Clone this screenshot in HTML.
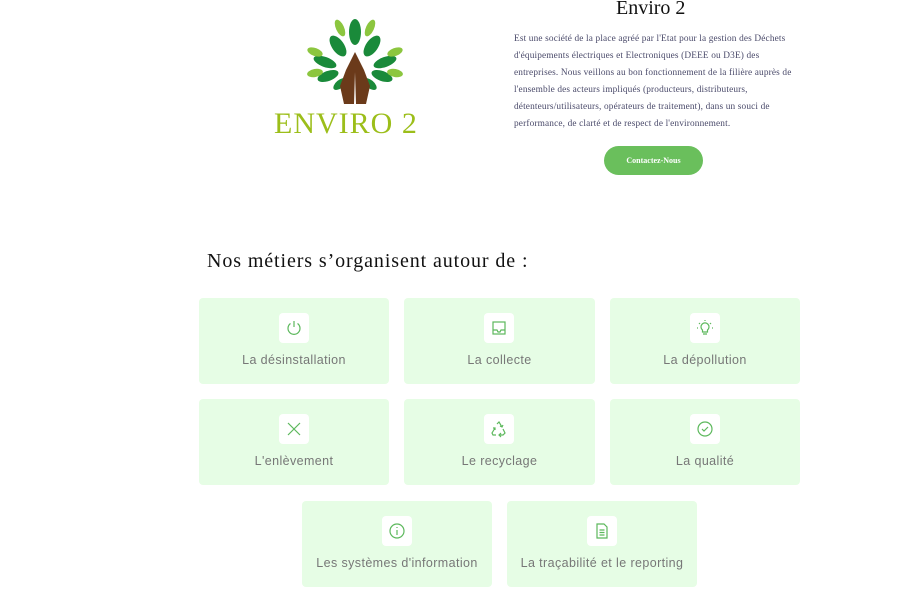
<!DOCTYPE html>
<html><head><meta charset="utf-8"><style>
body{margin:0;width:914px;height:608px;background:#fff;position:relative;overflow:hidden;font-family:"Liberation Sans",sans-serif}
.card{position:absolute;width:190px;height:86px;background:#e6fde5;border-radius:4px}
.ib{position:absolute;left:80px;top:15px;width:30px;height:30px;background:#fff;border-radius:4px}
.ib svg{position:absolute;left:6px;top:6px}
.lb{position:absolute;left:0;right:0;top:55px;text-align:center;font-size:12.5px;color:#777;letter-spacing:0.4px}
p.t{position:absolute;left:514px;top:31px;width:284px;margin:0;font-family:"Liberation Serif",serif;font-size:9.3px;line-height:17px;color:#4a4a6a;letter-spacing:0.15px}
</style></head><body>
<svg style="position:absolute;left:300px;top:18px" width="110" height="90" viewBox="0 0 110 90">
<g fill="#1a8a3a">
<ellipse cx="55" cy="14" rx="6" ry="13"/>
<ellipse cx="38" cy="28" rx="6" ry="12" transform="rotate(-35 38 28)"/>
<ellipse cx="72" cy="28" rx="6" ry="12" transform="rotate(35 72 28)"/>
<ellipse cx="25" cy="44" rx="5" ry="12" transform="rotate(-70 25 44)"/>
<ellipse cx="85" cy="44" rx="5" ry="12" transform="rotate(70 85 44)"/>
<ellipse cx="28" cy="58" rx="5" ry="11" transform="rotate(-110 28 58)"/>
<ellipse cx="82" cy="58" rx="5" ry="11" transform="rotate(110 82 58)"/>
<ellipse cx="40" cy="66" rx="4" ry="8" transform="rotate(-130 40 66)"/>
<ellipse cx="70" cy="66" rx="4" ry="8" transform="rotate(130 70 66)"/>
</g>
<g fill="#8cc63f">
<ellipse cx="40" cy="10" rx="4" ry="9" transform="rotate(-25 40 10)"/>
<ellipse cx="70" cy="10" rx="4" ry="9" transform="rotate(25 70 10)"/>
<ellipse cx="15" cy="34" rx="4" ry="8" transform="rotate(-70 15 34)"/>
<ellipse cx="95" cy="34" rx="4" ry="8" transform="rotate(70 95 34)"/>
<ellipse cx="15" cy="55" rx="4" ry="8" transform="rotate(-100 15 55)"/>
<ellipse cx="95" cy="55" rx="4" ry="8" transform="rotate(100 95 55)"/>
</g>
<path d="M55 34 L46 52 L40 68 L44 86 L54 86 L55 54 L56 86 L66 86 L70 68 L64 52 Z" fill="#6b3a1a"/>
</svg>
<div style="position:absolute;left:274px;top:107px;font-family:'Liberation Serif',serif;font-size:30px;color:#9cbe1a;letter-spacing:1px">ENVIRO 2</div>
<div style="position:absolute;left:616px;top:-3px;font-family:'Liberation Serif',serif;font-size:20px;color:#111">Enviro 2</div>
<p class="t">Est une société de la place agréé par l'Etat pour la gestion des Déchets d'équipements électriques et Electroniques (DEEE ou D3E) des entreprises. Nous veillons au bon fonctionnement de la filière auprès de l'ensemble des acteurs impliqués (producteurs, distributeurs, détenteurs/utilisateurs, opérateurs de traitement), dans un souci de performance, de clarté et de respect de l'environnement.</p>
<div style="position:absolute;left:604px;top:146px;width:99px;height:29px;border-radius:15px;background:#6abf5c;color:#fff;font-family:'Liberation Serif',serif;font-weight:bold;font-size:8px;line-height:29px;text-align:center">Contactez-Nous</div>
<div style="position:absolute;left:207px;top:250px;font-family:'Liberation Serif',serif;font-size:20px;color:#111;letter-spacing:0.9px">Nos métiers s’organisent autour de :</div>

<div class="card" style="left:199px;top:298px"><div class="ib"><svg width="18" height="18" viewBox="0 0 18 18" fill="none" stroke="#5cb85c" stroke-width="1.2"><path d="M9 2v6"/><path d="M5.5 4.5a6 6 0 1 0 7 0"/></svg></div><div class="lb">La désinstallation</div></div>
<div class="card" style="left:404px;top:298px;width:191px"><div class="ib"><svg width="18" height="18" viewBox="0 0 18 18" fill="none" stroke="#5cb85c" stroke-width="1.2"><rect x="3" y="3" width="12" height="12"/><path d="M3 11h4l1 2h2l1-2h4"/></svg></div><div class="lb">La collecte</div></div>
<div class="card" style="left:610px;top:298px"><div class="ib"><svg width="18" height="18" viewBox="0 0 18 18" fill="none" stroke="#5cb85c" stroke-width="1.2"><path d="M6.5 11a4 4 0 1 1 5 0v2h-5z"/><path d="M7 15h4M9 1v1M3 4l1 1M15 4l-1 1M1 9h1M16 9h1"/></svg></div><div class="lb">La dépollution</div></div>
<div class="card" style="left:199px;top:399px"><div class="ib"><svg width="18" height="18" viewBox="0 0 18 18" fill="none" stroke="#5cb85c" stroke-width="1.2"><path d="M3 3l12 12M15 3L3 15"/></svg></div><div class="lb">L'enlèvement</div></div>
<div class="card" style="left:404px;top:399px;width:191px"><div class="ib"><svg width="18" height="18" viewBox="0 0 18 18" fill="none" stroke="#5cb85c" stroke-width="1.2"><path d="M7 4l2-2 3 5M13 9l2 4-2 2H9M6 15H3l-1-2 3-5M10 6l2 1 1-2M11 13l-2 2 2 2M5 10l0-2-2 0"/></svg></div><div class="lb">Le recyclage</div></div>
<div class="card" style="left:610px;top:399px"><div class="ib"><svg width="18" height="18" viewBox="0 0 18 18" fill="none" stroke="#5cb85c" stroke-width="1.2"><circle cx="9" cy="9" r="7"/><path d="M6 9l2 2 4-4"/></svg></div><div class="lb">La qualité</div></div>
<div class="card" style="left:302px;top:501px"><div class="ib"><svg width="18" height="18" viewBox="0 0 18 18" fill="none" stroke="#5cb85c" stroke-width="1.2"><circle cx="9" cy="9" r="7"/><path d="M9 8v5M9 5v1"/></svg></div><div class="lb">Les systèmes d'information</div></div>
<div class="card" style="left:507px;top:501px"><div class="ib"><svg width="18" height="18" viewBox="0 0 18 18" fill="none" stroke="#5cb85c" stroke-width="1.2"><path d="M4 2h7l3 3v11H4z"/><path d="M6.5 8h5M6.5 10.5h5M6.5 13h5"/></svg></div><div class="lb">La traçabilité et le reporting</div></div>
</body></html>
